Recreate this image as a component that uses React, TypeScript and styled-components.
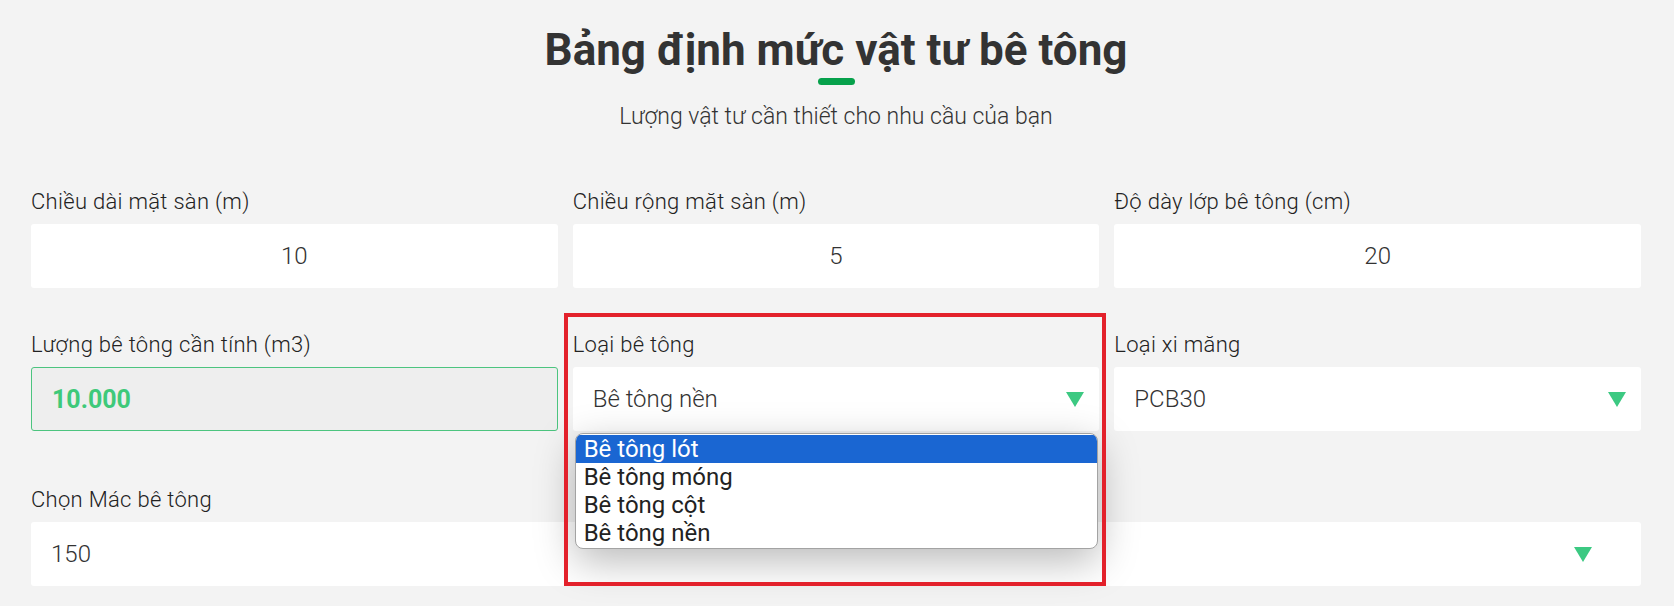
import React from 'react';
import styled, { createGlobalStyle } from 'styled-components';

const GlobalStyle = createGlobalStyle`
  html, body {
    margin: 0;
    padding: 0;
    background: #f3f3f3;
  }
  body {
    font-family: Roboto, "Noto Sans", Arial, sans-serif;
    color: #333;
  }
`;

const Page = styled.div`
  background: #f3f3f3;
  min-height: 606px;
  padding: 0 33px 0 31px;
  box-sizing: border-box;
`;

const Header = styled.header`
  display: flex;
  flex-direction: column;
  align-items: center;
  padding-top: 24px;
`;

const Title = styled.h1`
  margin: 0;
  font-size: 44px;
  line-height: 52px;
  font-weight: 700;
  color: #333;
`;

const Bar = styled.span`
  display: block;
  width: 37px;
  height: 7px;
  margin-top: 2px;
  border-radius: 4px;
  background: #06a14b;
`;

const Subtitle = styled.p`
  margin: 19px 0 0;
  font-size: 23px;
  line-height: 26px;
  font-weight: 300;
  color: #333;
`;

const Form = styled.div`
  display: grid;
  grid-template-columns: repeat(3, 1fr);
  column-gap: 15px;
  margin-top: 59px;
`;

const Field = styled.div<{ $span?: number; $gap?: number }>`
  position: relative;
  grid-column: span ${(p) => p.$span ?? 1};
  margin-bottom: ${(p) => p.$gap ?? 44}px;
  display: flex;
  flex-direction: column;
`;

const Label = styled.label`
  font-size: 22px;
  line-height: 26px;
  letter-spacing: 0.3px;
  font-weight: 300;
  color: #222;
  margin-bottom: 9px;
`;

const Box = styled.div<{ $align?: string }>`
  height: 64px;
  box-sizing: border-box;
  background: #fff;
  border-radius: 3px;
  display: flex;
  align-items: center;
  justify-content: ${(p) => p.$align ?? 'flex-start'};
  padding: 0 20px;
  font-size: 24px;
  font-weight: 300;
  color: #333;
`;

const Result = styled(Box)`
  background: #eeeeee;
  border: 1px solid #4cc47f;
  color: #3ec97a;
  font-size: 25px;
  font-weight: 700;
`;

const SelectBox = styled(Box)<{ $arrowInset?: number }>`
  position: relative;
  justify-content: space-between;
  padding-right: ${(p) => p.$arrowInset ?? 15}px;
`;

const Arrow = styled.span`
  width: 0;
  height: 0;
  border-left: 9px solid transparent;
  border-right: 9px solid transparent;
  border-top: 15px solid #3cc982;
`;

const OptionList = styled.ul`
  position: absolute;
  left: 2px;
  right: 1px;
  top: calc(100% + 2px);
  margin: 0;
  padding: 1px 0;
  list-style: none;
  background: #fff;
  border: 1px solid #a3a3a3;
  border-radius: 8px;
  overflow: hidden;
  box-shadow: 0 12px 40px rgba(0, 0, 0, 0.28);
  z-index: 5;
`;

const Option = styled.li<{ $active?: boolean }>`
  height: 28px;
  line-height: 28px;
  padding: 0 8px;
  font-size: 24px;
  color: ${(p) => (p.$active ? '#fff' : '#222')};
  background: ${(p) => (p.$active ? '#1a66d2' : 'transparent')};
`;

const Highlight = styled.div`
  position: absolute;
  top: -19px;
  left: -9px;
  right: -7px;
  height: 273px;
  border: 4px solid #e3212b;
  box-sizing: border-box;
  pointer-events: none;
  z-index: 6;
`;

const ControlWrap = styled.div`
  position: relative;
`;

const App = () => {
  return (
    <Page>
      <GlobalStyle />
      <Header>
        <Title>Bảng định mức vật tư bê tông</Title>
        <Bar />
        <Subtitle>Lượng vật tư cần thiết cho nhu cầu của bạn</Subtitle>
      </Header>
      <Form>
        <Field>
          <Label>Chiều dài mặt sàn (m)</Label>
          <Box $align="center">10</Box>
        </Field>
        <Field>
          <Label>Chiều rộng mặt sàn (m)</Label>
          <Box $align="center">5</Box>
        </Field>
        <Field>
          <Label>Độ dày lớp bê tông (cm)</Label>
          <Box $align="center">20</Box>
        </Field>

        <Field $gap={56}>
          <Label>Lượng bê tông cần tính (m3)</Label>
          <Result>10.000</Result>
        </Field>
        <Field $gap={56}>
          <Highlight />
          <Label>Loại bê tông</Label>
          <ControlWrap>
            <SelectBox>
              <span>Bê tông nền</span>
              <Arrow />
            </SelectBox>
            <OptionList>
              <Option $active>Bê tông lót</Option>
              <Option>Bê tông móng</Option>
              <Option>Bê tông cột</Option>
              <Option>Bê tông nền</Option>
            </OptionList>
          </ControlWrap>
        </Field>
        <Field $gap={56}>
          <Label>Loại xi măng</Label>
          <SelectBox>
            <span>PCB30</span>
            <Arrow />
          </SelectBox>
        </Field>

        <Field $span={3} $gap={0}>
          <Label>Chọn Mác bê tông</Label>
          <SelectBox $arrowInset={49}>
            <span>150</span>
            <Arrow />
          </SelectBox>
        </Field>
      </Form>
    </Page>
  );
};

export default App;
